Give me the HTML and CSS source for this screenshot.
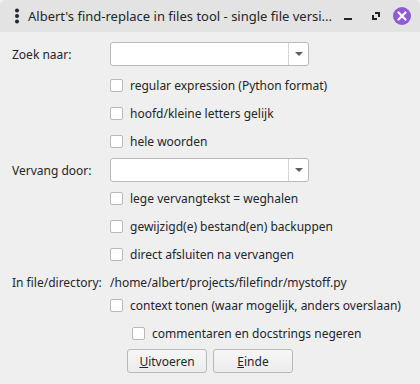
FILE: index.html
```html
<!DOCTYPE html>
<html lang="nl">
<head>
    <meta charset="UTF-8">
    <title>Albert's find-replace in files tool</title>
    <link rel="stylesheet" href="styles.css">
</head>
<body>
    <div class="window">
        <div class="titlebar">
            <span class="menu-dots">
                <svg width="6" height="16" viewBox="0 0 6 16"><circle cx="3" cy="2.5" r="2" /><circle cx="3" cy="8" r="2" /><circle cx="3" cy="13.5" r="2" /></svg>
            </span>
            <span class="title">Albert's find-replace in files tool - single file versi...</span>
            <span class="tb-btn">
                <svg width="10" height="10" viewBox="0 0 10 10"><rect x="1" y="7" width="8" height="2" /></svg>
            </span>
            <span class="tb-btn">
                <svg width="10" height="10" viewBox="0 0 10 10"><path d="M4 1h5v5h-2v-3h-3z M1 4h2v3h3v2h-5z" /></svg>
            </span>
            <span class="tb-close">
                <svg width="18" height="18" viewBox="0 0 18 18"><circle cx="9" cy="9" r="9" fill="#8f5ad9" /><path d="M5.5 5.5l7 7M12.5 5.5l-7 7" stroke="#fff" stroke-width="2.2" stroke-linecap="round" /></svg>
            </span>
        </div>

        <div class="content">
            <div class="row field-row">
                <label class="lbl">Zoek naar:</label>
                <div class="combo"><span class="combo-btn"><span class="arrow"></span></span></div>
            </div>
            <div class="row check-row first"><span class="box"></span>regular expression (Python format)</div>
            <div class="row check-row"><span class="box"></span>hoofd/kleine letters gelijk</div>
            <div class="row check-row"><span class="box"></span>hele woorden</div>

            <div class="row field-row second">
                <label class="lbl">Vervang door:</label>
                <div class="combo"><span class="combo-btn"><span class="arrow"></span></span></div>
            </div>
            <div class="row check-row after"><span class="box"></span>lege vervangtekst = weghalen</div>
            <div class="row check-row"><span class="box"></span>gewijzigd(e) bestand(en) backuppen</div>
            <div class="row check-row"><span class="box"></span>direct afsluiten na vervangen</div>

            <div class="row path-row">
                <span class="lbl">In file/directory:</span>
                <span>/home/albert/projects/filefindr/mystoff.py</span>
            </div>
            <div class="row check-row ctx"><span class="box"></span>context tonen (waar mogelijk, anders overslaan)</div>
            <div class="row check-row sub"><span class="box"></span>commentaren en docstrings negeren</div>

            <div class="buttons">
                <button><u>U</u>itvoeren</button>
                <button><u>E</u>inde</button>
            </div>
        </div>
    </div>
</body>
</html>
```

FILE: styles.css
```css
body {
    margin: 0;
    font-family: "Noto Sans", "DejaVu Sans", sans-serif;
    font-size: 12px;
    color: #232629;
    background: #efefef;
}
.window {
    width: 420px;
    height: 384px;
    background: #efefef;
    border-radius: 6px 6px 0 0;
    overflow: hidden;
}
.titlebar {
    height: 32px;
    background: #e3e3e3;
    display: flex;
    align-items: center;
    padding: 0 8px 0 14px;
    box-sizing: border-box;
}
.menu-dots {
    display: flex;
    width: 6px;
    fill: #232629;
}
.title {
    margin-left: 8px;
    font-size: 13px;
    flex: 1;
    white-space: nowrap;
}
.tb-btn {
    width: 28px;
    display: flex;
    justify-content: center;
    fill: #232629;
}
.tb-close {
    width: 20px;
    margin-left: 2px;
    display: flex;
    justify-content: center;
}
.content {
    padding: 10px 0 0 12px;
}
.row {
    display: flex;
    align-items: center;
}
.lbl {
    width: 98px;
    flex: none;
}
.field-row {
    height: 24px;
}
.field-row.second {
    margin-top: 3px;
}
.combo {
    width: 197px;
    height: 22px;
    background: #fff;
    border: 1px solid #b7b9ba;
    border-radius: 3px;
    display: flex;
    justify-content: flex-end;
}
.combo-btn {
    width: 19px;
    border-left: 1px solid #d4d5d6;
    display: flex;
    align-items: center;
    justify-content: center;
}
.arrow {
    width: 0;
    height: 0;
    border-left: 4px solid transparent;
    border-right: 4px solid transparent;
    border-top: 4px solid #5d6063;
}
.check-row {
    height: 28px;
    padding-left: 98px;
}
.check-row.first {
    margin-top: 5px;
}
.check-row.after {
    margin-top: 2px;
}
.box {
    width: 11px;
    height: 11px;
    background: #fff;
    border: 1px solid #b7b9ba;
    border-radius: 2px;
    margin-right: 7px;
    flex: none;
}
.path-row {
    height: 28px;
}
.ctx {
    height: 18px;
}
.sub {
    margin-top: 5px;
    padding-left: 120px;
}
.buttons {
    display: flex;
    gap: 6px;
    padding-left: 115px;
    margin-top: 2px;
}
button {
    width: 80px;
    height: 24px;
    font: inherit;
    font-size: 12px;
    color: #232629;
    background: linear-gradient(#f6f6f6, #ececec);
    border: 1px solid #b7b9ba;
    border-radius: 3px;
    padding: 0;
}
```
